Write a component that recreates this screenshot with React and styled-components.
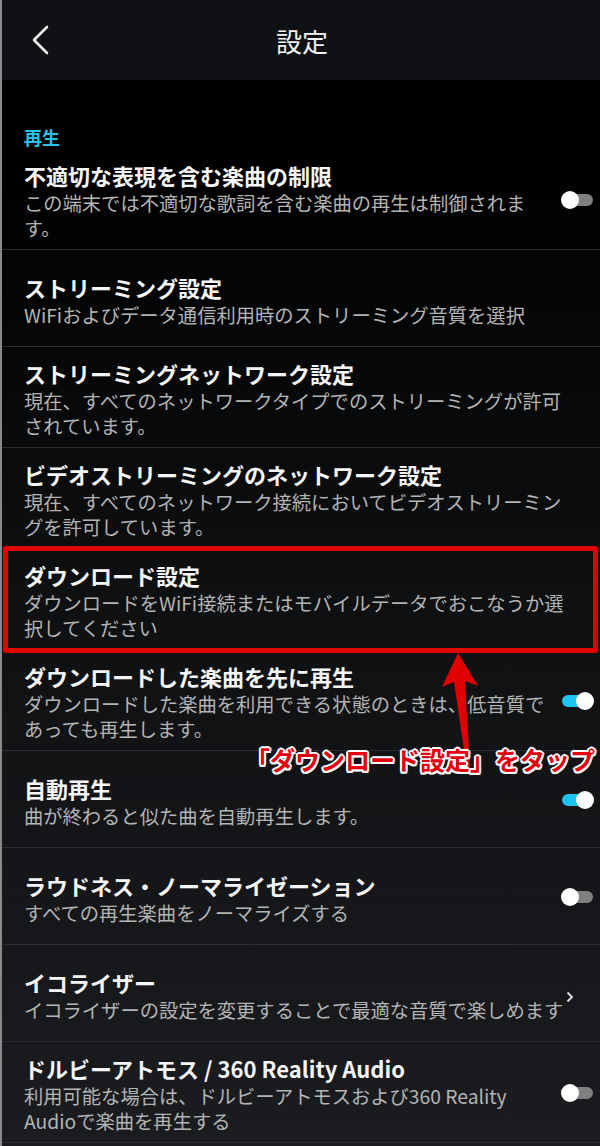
import React from 'react';
import styled, { createGlobalStyle } from 'styled-components';

const GlobalStyle = createGlobalStyle`
  html, body {
    margin: 0;
    padding: 0;
    background: #000;
  }
  body {
    font-family: "Noto Sans CJK JP", "Noto Sans", sans-serif;
  }
`;

const Page = styled.div`
  position: relative;
  width: 600px;
  height: 1146px;
  overflow: hidden;
  box-sizing: border-box;
  border-left: 2px solid #8a8a8a;
  background: linear-gradient(180deg, #000 0px, #000 160px, #0e1012 600px, #1a1c1f 1146px);
`;

const Header = styled.header`
  position: relative;
  height: 80px;
  display: flex;
  align-items: center;
  justify-content: center;
  background: #0f1115;
`;

const BackButton = styled.button`
  position: absolute;
  left: 26px;
  top: 24px;
  width: 26px;
  height: 32px;
  padding: 0;
  border: none;
  background: none;
  display: flex;
  align-items: center;
  justify-content: center;
`;

const HeaderTitle = styled.h1`
  margin: 0 0 0 2px;
  font-size: 26px;
  font-weight: 400;
  color: #f2f2f2;
`;

const SectionLabel = styled.div`
  padding: 45px 22px 0;
  height: 24px;
  line-height: 24px;
  font-size: 18px;
  font-weight: 700;
  color: #27c4ea;
`;

const List = styled.ul`
  list-style: none;
  margin: 0;
  padding: 0;
`;

const Row = styled.li`
  position: relative;
  box-sizing: border-box;
  min-height: 97px;
  padding: 10px 0 8px 22px;
  display: flex;
  align-items: center;
  border-bottom: 1px solid #2b2d31;

  ${(p) =>
    p.$highlight &&
    `
    &::after {
      content: '';
      position: absolute;
      left: 1px;
      right: 2px;
      top: -3px;
      bottom: -4px;
      border: 5px solid #e10000;
      border-radius: 3px;
      pointer-events: none;
    }
  `}
`;

const Texts = styled.div`
  width: ${(p) => p.$width}px;
  display: flex;
  flex-direction: column;
`;

const Title = styled.div`
  font-size: 22px;
  font-weight: 700;
  line-height: 32px;
  color: #f5f5f5;
  white-space: nowrap;
`;

const Desc = styled.div`
  font-size: 19.3px;
  line-height: 25px;
  color: #b4b4b4;
`;

const Track = styled.div`
  position: relative;
  margin-left: auto;
  margin-right: 7px;
  width: 31px;
  height: 12px;
  border-radius: 6px;
  background: ${(p) => (p.$on ? '#1ec3f0' : '#7f7f7f')};
`;

const Knob = styled.div`
  position: absolute;
  top: -3px;
  ${(p) => (p.$on ? 'right: -1px;' : 'left: -1px;')}
  width: 18px;
  height: 18px;
  border-radius: 50%;
  background: #fff;
`;

const Chevron = styled.svg`
  margin-left: auto;
  margin-right: 26px;
  margin-top: 6px;
  flex-shrink: 0;
`;

const Arrow = styled.svg`
  position: absolute;
  left: 439px;
  top: 652px;
`;

const Caption = styled.div`
  position: absolute;
  left: 243px;
  top: 744px;
  font-size: 25px;
  font-weight: 700;
  line-height: 30px;
  color: #e5000f;
  white-space: nowrap;
  text-shadow:
    2px 0 0 #fff, -2px 0 0 #fff, 0 2px 0 #fff, 0 -2px 0 #fff,
    1.5px 1.5px 0 #fff, -1.5px 1.5px 0 #fff, 1.5px -1.5px 0 #fff, -1.5px -1.5px 0 #fff;
`;

const Toggle = ({ on }) => (
  <Track $on={on}>
    <Knob $on={on} />
  </Track>
);

const items = [
  {
    title: '不適切な表現を含む楽曲の制限',
    desc: 'この端末では不適切な歌詞を含む楽曲の再生は制御されます。',
    control: 'off',
  },
  {
    title: 'ストリーミング設定',
    desc: 'WiFiおよびデータ通信利用時のストリーミング音質を選択',
  },
  {
    title: 'ストリーミングネットワーク設定',
    desc: '現在、すべてのネットワークタイプでのストリーミングが許可されています。',
  },
  {
    title: 'ビデオストリーミングのネットワーク設定',
    desc: '現在、すべてのネットワーク接続においてビデオストリーミングを許可しています。',
  },
  {
    title: 'ダウンロード設定',
    desc: 'ダウンロードをWiFi接続またはモバイルデータでおこなうか選択してください',
    highlight: true,
  },
  {
    title: 'ダウンロードした楽曲を先に再生',
    desc: 'ダウンロードした楽曲を利用できる状態のときは、低音質であっても再生します。',
    control: 'on',
  },
  {
    title: '自動再生',
    desc: '曲が終わると似た曲を自動再生します。',
    control: 'on',
  },
  {
    title: 'ラウドネス・ノーマライゼーション',
    desc: 'すべての再生楽曲をノーマライズする',
    control: 'off',
  },
  {
    title: 'イコライザー',
    desc: 'イコライザーの設定を変更することで最適な音質で楽しめます',
    control: 'chevron',
  },
  {
    title: 'ドルビーアトモス / 360 Reality Audio',
    desc: '利用可能な場合は、ドルビーアトモスおよび360 Reality Audioで楽曲を再生する',
    control: 'off',
  },
];

const widthFor = (control) => {
  if (control === 'on' || control === 'off') return 532;
  if (control === 'chevron') return 547;
  return 554;
};

const App = () => {
  return (
    <>
      <GlobalStyle />
      <Page>
        <Header>
          <BackButton aria-label="戻る">
            <svg width="20" height="30" viewBox="0 0 20 30">
              <polyline
                points="16,2 3,15 16,28"
                fill="none"
                stroke="#f2f2f2"
                strokeWidth="2.6"
                strokeLinecap="round"
                strokeLinejoin="round"
              />
            </svg>
          </BackButton>
          <HeaderTitle>設定</HeaderTitle>
        </Header>

        <SectionLabel>再生</SectionLabel>

        <List>
          {items.map((item) => (
            <Row key={item.title} $highlight={item.highlight}>
              <Texts $width={widthFor(item.control)}>
                <Title>{item.title}</Title>
                <Desc>{item.desc}</Desc>
              </Texts>
              {item.control === 'on' && <Toggle on />}
              {item.control === 'off' && <Toggle />}
              {item.control === 'chevron' && (
                <Chevron width="8" height="12" viewBox="0 0 8 12">
                  <polyline
                    points="1.5,1.5 6,6 1.5,10.5"
                    fill="none"
                    stroke="#e0e0e0"
                    strokeWidth="1.8"
                  />
                </Chevron>
              )}
            </Row>
          ))}
        </List>

        <Arrow width="44" height="122" viewBox="0 0 44 122">
          <polygon
            points="17,1 37,34 24,29 29,118 26,118 13,30 1,35"
            fill="#e10000"
          />
        </Arrow>
        <Caption>「ダウンロード設定」をタップ</Caption>
      </Page>
    </>
  );
};

export default App;
